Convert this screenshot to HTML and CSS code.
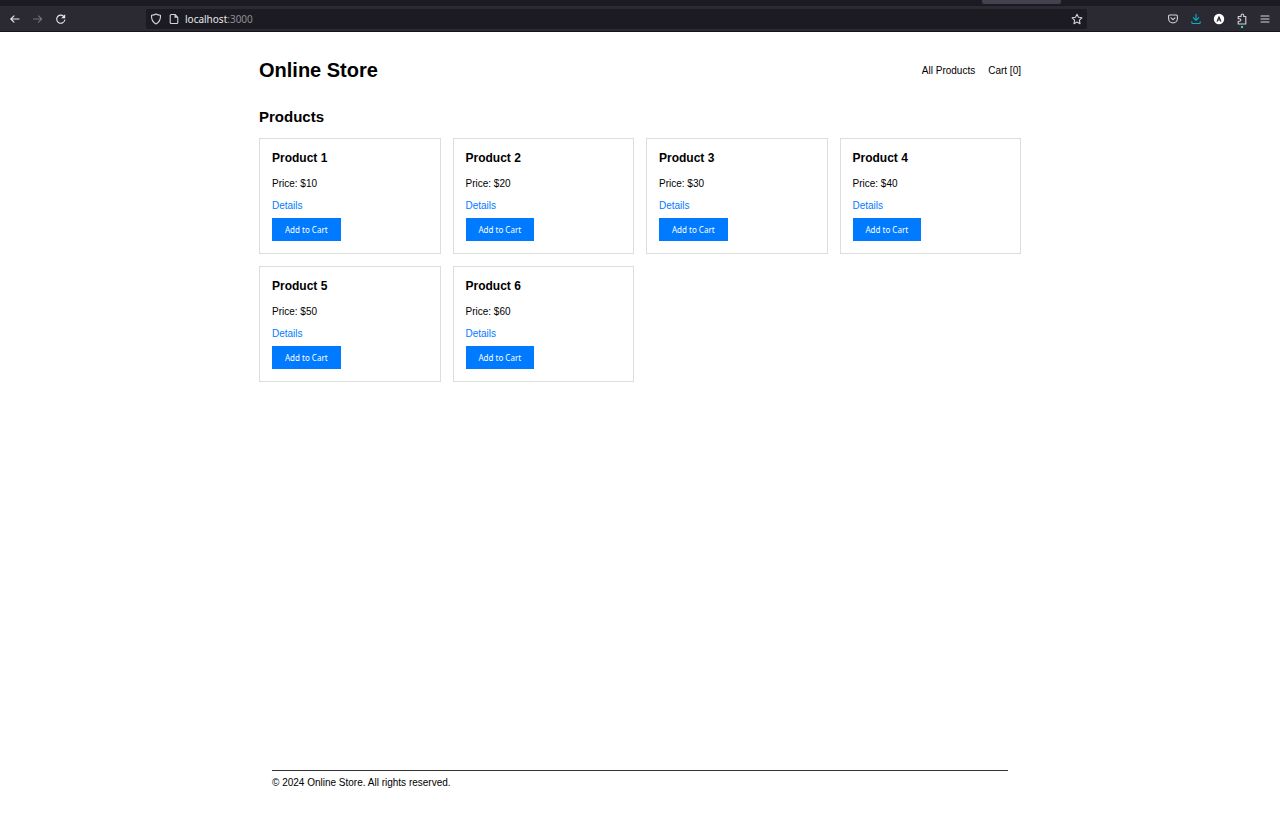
FILE: index.html
```html
<!DOCTYPE html>
<html lang="en">
<head>
<meta charset="utf-8">
<meta name="viewport" content="width=device-width, initial-scale=1">
<title>Online Store</title>
<link rel="stylesheet" href="styles.css">
</head>
<body>
<div class="browser">
  <div class="tabs"><div class="active-tab"></div></div>
  <div class="toolbar">
    <div class="history">
      <button class="tool" aria-label="Back"><svg viewBox="0 0 12 12"><path d="M10 6H1.800M5 2.800L1.800 6 5 9.200"/></svg></button>
      <button class="tool dim" aria-label="Forward"><svg viewBox="0 0 12 12"><path d="M1.500 6h8.200M6.500 2.800L9.700 6 6.500 9.200"/></svg></button>
      <button class="tool" aria-label="Reload"><svg viewBox="0 0 12 12"><path d="M9.800 7A4.100 4.100 0 1 1 8.700 3.300"/><path class="solid" d="M10.200 1.200v4H6.200z"/></svg></button>
    </div>
    <div class="address">
      <svg class="icon" viewBox="0 0 12 12"><path d="M6 1C4.8 1.8 3.2 2.2 1.5 2.3c-.2 3.8 1 7 4.500 8.700 3.500-1.700 4.700-4.900 4.500-8.700C8.800 2.200 7.200 1.800 6 1z"/></svg>
      <svg class="icon page-icon" viewBox="0 0 12 12"><path d="M7 1.500H3.200a1 1 0 0 0-1 1v7a1 1 0 0 0 1 1h5.600a1 1 0 0 0 1-1V4.300z"/><path class="solid" d="M6.500 1.500v3.300h3.300z"/></svg>
      <span class="url">localhost<span class="port">:3000</span></span>
      <svg class="icon star" viewBox="0 0 12 12"><path d="M6 1.200l1.500 3.100 3.400.5-2.500 2.400.6 3.500L6 9.100l-3 1.600.6-3.500L1.100 4.800l3.400-.5z"/></svg>
    </div>
    <div class="actions">
      <button class="tool" aria-label="Save to Pocket"><svg viewBox="0 0 12 12"><path d="M2.600 2h6.800a1 1 0 0 1 1 1v2.600a4.400 4.400 0 0 1-8.800 0V3a1 1 0 0 1 1-1z"/><path d="M4 4.800l2 1.900 2-1.900"/></svg></button>
      <button class="tool download" aria-label="Downloads"><svg viewBox="0 0 12 12"><path d="M6 1.200v6M3.300 4.700L6 7.400l2.700-2.700M1.800 8.800v.700a1 1 0 0 0 1 1h6.400a1 1 0 0 0 1-1V8.800"/></svg></button>
      <button class="tool account" aria-label="Account"><svg viewBox="0 0 12 12"><circle class="solid" cx="6" cy="6" r="5.200"/><path class="mark" d="M4.200 8.200L6 3.800l1.800 4.400M4.900 7h2.200"/></svg></button>
      <button class="tool ext" aria-label="Extensions"><svg viewBox="0 0 12 12"><path d="M2.200 11V8.300h1.400a1.200 1.200 0 0 0 0-2.500H2.200V3.500h2.900V2.300a1.300 1.300 0 0 1 2.600 0v1.200h2.100V11z"/></svg></button>
      <button class="tool" aria-label="Menu"><svg viewBox="0 0 12 12"><path d="M2 3h8M2 6h8M2 9h8"/></svg></button>
    </div>
  </div>
</div>
<div class="site">
  <header class="header">
    <h1 class="brand">Online Store</h1>
    <nav class="nav"><a href="#products">All Products</a><a href="#cart">Cart [0]</a></nav>
  </header>
  <main class="main" id="products">
    <h2 class="heading">Products</h2>
    <div class="grid">
      <article class="card"><h3 class="name">Product 1</h3><p class="price">Price: $10</p><a class="details" href="#p1">Details</a><button class="add">Add to Cart</button></article>
      <article class="card"><h3 class="name">Product 2</h3><p class="price">Price: $20</p><a class="details" href="#p2">Details</a><button class="add">Add to Cart</button></article>
      <article class="card"><h3 class="name">Product 3</h3><p class="price">Price: $30</p><a class="details" href="#p3">Details</a><button class="add">Add to Cart</button></article>
      <article class="card"><h3 class="name">Product 4</h3><p class="price">Price: $40</p><a class="details" href="#p4">Details</a><button class="add">Add to Cart</button></article>
      <article class="card"><h3 class="name">Product 5</h3><p class="price">Price: $50</p><a class="details" href="#p5">Details</a><button class="add">Add to Cart</button></article>
      <article class="card"><h3 class="name">Product 6</h3><p class="price">Price: $60</p><a class="details" href="#p6">Details</a><button class="add">Add to Cart</button></article>
    </div>
  </main>
  <footer class="footer">© 2024 Online Store. All rights reserved.</footer>
</div>
</body>
</html>
```
FILE: styles.css
```css
* { box-sizing: border-box; }
body {
  margin: 0;
  min-height: 100vh;
  display: flex;
  flex-direction: column;
  background: #fff;
  color: #000;
  font: 10px/12px "Liberation Sans", Arial, sans-serif;
}
h1, h2, h3, p { margin: 0; }
a { color: inherit; text-decoration: none; }
button { border: 0; font: inherit; cursor: pointer; }

.browser { background: #2b2a33; border-bottom: 1px solid #15141a; }
.tabs {
  display: flex;
  justify-content: flex-end;
  height: 6px;
  padding-right: 219px;
  background: #1c1b22;
}
.active-tab { width: 79px; height: 4px; background: #42414d; border-radius: 0 0 2px 2px; }
.toolbar { display: flex; align-items: center; height: 25px; padding: 0 9px; }
.history { display: flex; gap: 11px; width: 137px; }
.tool { display: flex; padding: 0; background: none; color: #e8e8ec; }
.tool svg, .icon {
  width: 12px;
  height: 12px;
  fill: none;
  stroke: currentColor;
  stroke-width: 1.1;
  stroke-linecap: round;
  stroke-linejoin: round;
}
.tool .solid, .icon .solid { fill: currentColor; stroke: none; }
.tool .mark { stroke: #2b2a33; }
.tool.dim { color: #73727a; }
.address {
  flex: 1;
  display: flex;
  align-items: center;
  height: 20px;
  padding: 0 4px;
  background: #1c1b22;
  border-radius: 2px;
  color: #d4d4d9;
}
.page-icon { margin-left: 6px; }
.url { flex: 1; margin-left: 5px; font-family: "Noto Sans", sans-serif; font-size: 10px; color: #e8e8ec; }
.port { color: #8f8e96; }
.actions { display: flex; gap: 11px; margin-left: 80px; }
.actions .tool { color: #d4d4d9; }
.actions .download { color: #00b3cc; }
.actions .account { color: #fff; }
.ext { position: relative; }
.ext::after {
  content: "";
  position: absolute;
  left: 5px;
  bottom: -3px;
  width: 2px;
  height: 2px;
  background: #2fe0a0;
}

.site {
  flex: 1;
  display: flex;
  flex-direction: column;
  width: 100%;
  max-width: 788px;
  margin: 0 auto;
  padding: 26px 13px 25px;
}
.header { display: flex; align-items: center; justify-content: space-between; }
.brand { font-size: 20px; line-height: 24px; }
.nav { display: flex; gap: 13px; line-height: 13px; }
.main { flex: 1; padding-top: 26px; }
.heading { font-size: 15px; line-height: 18px; margin-bottom: 12px; }
.grid { display: grid; grid-template-columns: repeat(4, 1fr); gap: 12px; }
.card {
  display: flex;
  flex-direction: column;
  align-items: flex-start;
  padding: 12px;
  border: 1px solid #ddd;
}
.name { font-size: 12px; line-height: 15px; margin-bottom: 12px; }
.price { margin-bottom: 10px; }
.details { margin-bottom: 6px; color: #007bff; }
.add {
  padding: 6px 13px;
  background: #007bff;
  color: #fff;
  font-family: "Noto Sans", sans-serif;
  font-size: 8px;
  line-height: 11px;
}
.footer { margin: 0 13px; padding-top: 6px; border-top: 1px solid #333; }
```
